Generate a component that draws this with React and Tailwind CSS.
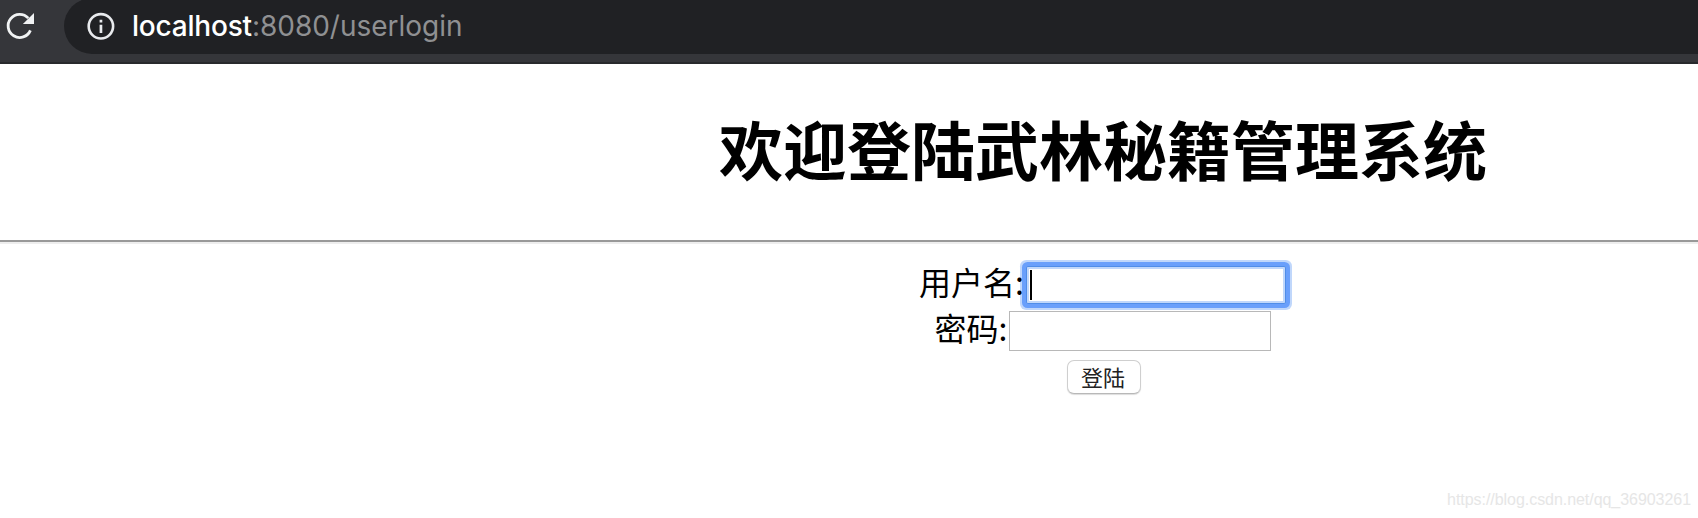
function ReloadIcon() {
  return (
    <svg className="size-[42px] shrink-0" viewBox="0 0 42 42" fill="none">
      <path d="M30.4 30.4A11.6 11.6 0 1 1 28.3 18.1" stroke="#f1f3f4" strokeWidth="2.8" />
      <path d="M34 13v11H22.9z" fill="#f1f3f4" />
    </svg>
  );
}

function InfoIcon() {
  return (
    <svg className="size-7 shrink-0" viewBox="0 0 28 28" fill="none">
      <circle cx="13.9" cy="14.3" r="12.2" stroke="#e8eaed" strokeWidth="2.6" />
      <path d="M12.6 7.7h2.7v2.8h-2.7zM12.6 12.7h2.7v8.2h-2.7z" fill="#e8eaed" />
    </svg>
  );
}

function AddressBar() {
  return (
    <header className="flex h-16 items-start overflow-hidden border-b-2 border-[#28292c] bg-[#35363a]">
      <div className="w-16 shrink-0">
        <ReloadIcon />
      </div>
      <div className="-mt-0.5 flex h-14 flex-1 items-center rounded-l-full bg-[#202124] pl-[22.5px]">
        <InfoIcon />
        <span className="ml-[17.5px] font-['Inter','Liberation_Sans',sans-serif] text-[28px] leading-none tracking-[-0.02px] whitespace-nowrap text-[#8f9092]">
          <span className="font-[450] tracking-[-0.2px] text-white">localhost</span>:8080/userlogin
        </span>
      </div>
    </header>
  );
}

export default function App() {
  return (
    <div className="flex h-[518px] w-full flex-col overflow-hidden bg-white font-['Noto_Sans_CJK_SC',sans-serif] text-black">
      <AddressBar />
      <main className="flex-1">
        <h1 className="flex h-44 items-center justify-center pb-[10px] pl-[508px] text-[64px] leading-none font-bold whitespace-nowrap">
          欢迎登陆武林秘籍管理系统
        </h1>
        <hr className="h-1 border-t-2 border-b-2 border-t-[#999999] border-b-[#eeeeee]" />
        <form className="flex flex-col items-center pt-[21px] pl-[508px]" onSubmit={(e) => e.preventDefault()}>
          <label className="-ml-px flex h-10 items-center text-[32px] leading-none">
            <span className="relative z-10 w-[107px] pb-[9px] whitespace-nowrap">用户名:</span>
            <span className="flex h-[38px] w-[260px] items-center rounded-[2px] border border-[#4f8de8] bg-white pl-[3px] shadow-[inset_0_0_0_2px_#c0d7fb,0_0_0_4px_#699ffb,0_0_0_6px_#c0d7fb]">
              <span className="h-[30px] w-0.5 bg-black" />
            </span>
          </label>
          <label className="mt-1.5 -ml-px flex h-10 items-center text-[32px] leading-none">
            <span className="w-[74px] pb-[9px] whitespace-nowrap">密码:</span>
            <input type="password" className="h-10 w-[262px] border border-[#b8b8b8] bg-white px-1 outline-none" />
          </label>
          <button className="mt-[9px] ml-px flex h-[34px] w-[74px] items-center justify-center rounded-[7px] border border-[#cfcfcf] border-b-[#b8b8b8] bg-white pr-px pb-[3px] text-[22px] leading-none text-[#222222] shadow-[0_1px_1px_#dddddd]">
            登陆
          </button>
        </form>
      </main>
      <footer className="flex h-[28px] items-start justify-end pr-[7px] font-['Liberation_Sans',sans-serif] text-[16px] leading-5 tracking-[-0.05px] text-[#e6e6e6]">
        https://blog.csdn.net/qq_36903261
      </footer>
    </div>
  );
}
